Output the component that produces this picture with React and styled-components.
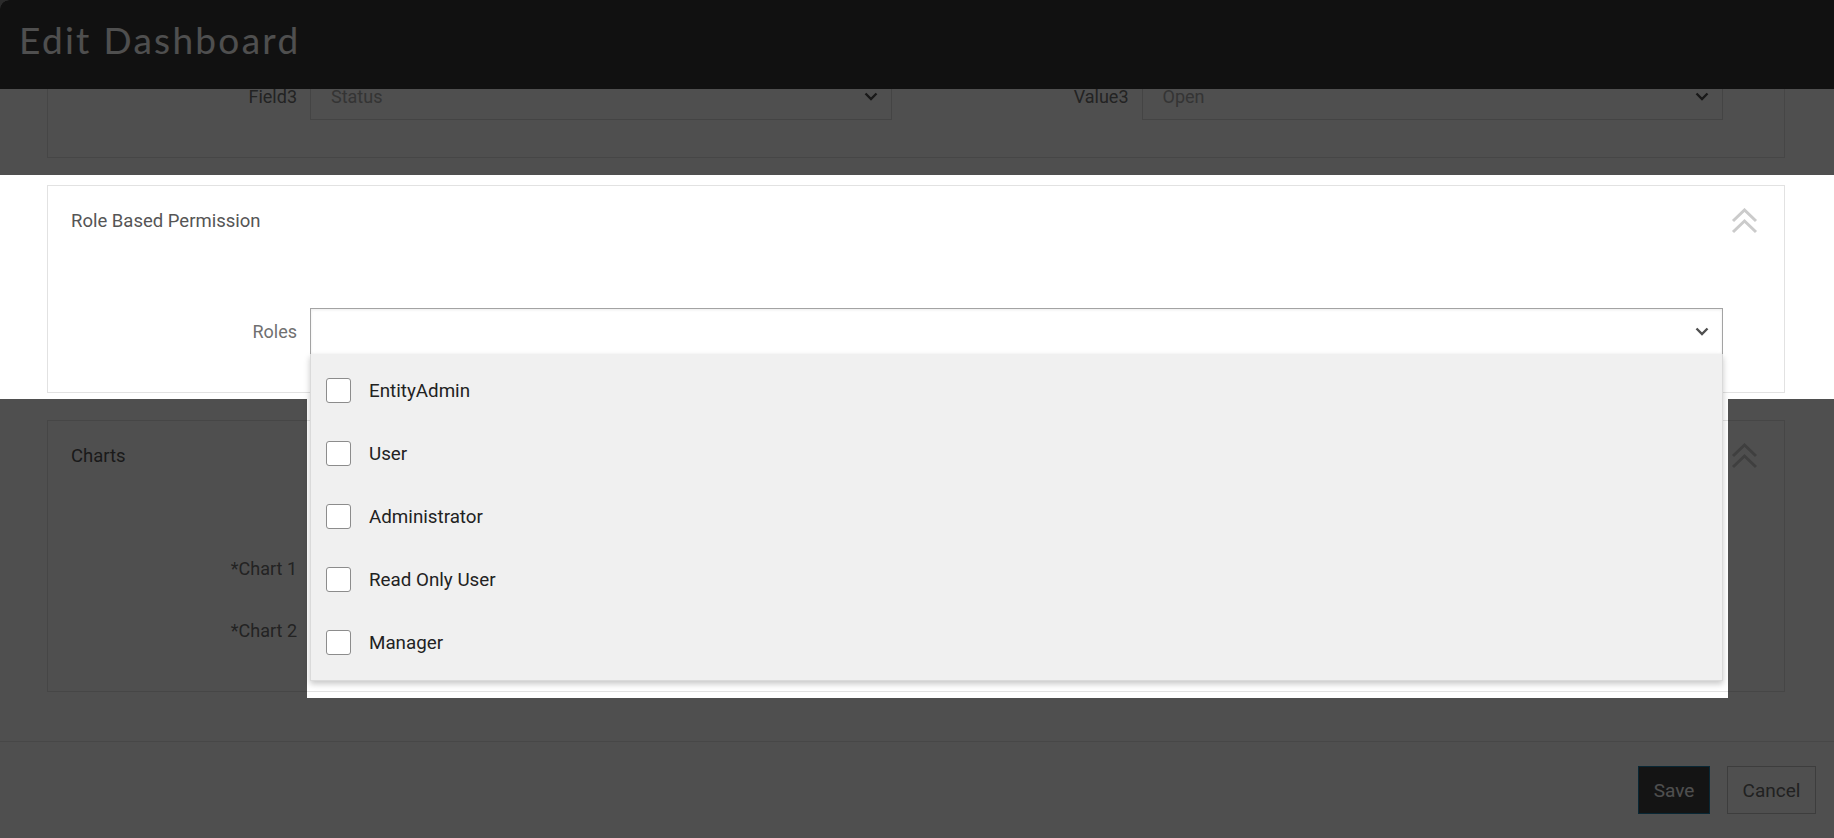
import React, { useLayoutEffect, useRef } from "react";
import styled, { createGlobalStyle } from "styled-components";

const GlobalStyle = createGlobalStyle`
  html, body {
    margin: 0;
    padding: 0;
    background: #8a8a8a;
    font-family: Roboto, "Liberation Sans", Arial, sans-serif;
  }
  * {
    box-sizing: border-box;
  }
`;

const ROLES = ["EntityAdmin", "User", "Administrator", "Read Only User", "Manager"];

// spotlight of the guided tour: everything but these two boxes is dimmed
const MASK_PATH =
  "M0 0H1834V838H0Z M0 175H1834V399H0Z M307 399H1728V698H307Z";

function Chevron() {
  return (
    <svg width="14" height="9" viewBox="0 0 14 9">
      <path d="M1.5 1.5L7 7L12.5 1.5" fill="none" stroke="#505050" strokeWidth="2.4" />
    </svg>
  );
}

function DoubleChevron() {
  return (
    <svg width="27" height="26" viewBox="0 0 27 26">
      <g fill="none" stroke="#cbcbcb" strokeWidth="3">
        <path d="M2 13L13.5 2L25 13" />
        <path d="M2 24L13.5 13L25 24" />
      </g>
    </svg>
  );
}

function Select({ value, $active, children }) {
  return (
    <SelectBox $active={$active}>
      <SelectValue>{value}</SelectValue>
      <Chevron />
      {children}
    </SelectBox>
  );
}

function Field({ label, value }) {
  return (
    <FieldCell>
      <Label>{label}</Label>
      <Select value={value} />
    </FieldCell>
  );
}

export default function App() {
  const bodyRef = useRef(null);
  const roleRef = useRef(null);

  useLayoutEffect(() => {
    // modal body is scrolled so the role panel sits under the tour spotlight
    bodyRef.current.scrollTop = roleRef.current.offsetTop - 96;
  }, []);

  return (
    <Page>
      <GlobalStyle />
      <Modal>
        <Header>
          <Title>Edit Dashboard</Title>
        </Header>
        <Body ref={bodyRef}>
          <Panel>
            <PanelHeader>
              <PanelTitle>Filters</PanelTitle>
              <DoubleChevron />
            </PanelHeader>
            <Rows>
              <Row>
                <Field label="Field1" value="Type" />
                <Field label="Value1" value="Incident" />
              </Row>
              <Row>
                <Field label="Field2" value="Priority" />
                <Field label="Value2" value="High" />
              </Row>
              <Row>
                <Field label="Field3" value="Status" />
                <Field label="Value3" value="Open" />
              </Row>
            </Rows>
          </Panel>

          <Panel ref={roleRef}>
            <PanelHeader>
              <PanelTitle>Role Based Permission</PanelTitle>
              <DoubleChevron />
            </PanelHeader>
            <Rows>
              <Row>
                <FieldCell>
                  <Label>Roles</Label>
                  <Select value="" $active>
                    <Dropdown>
                      {ROLES.map((role) => (
                        <Option key={role}>
                          <CheckBox />
                          <OptionText>{role}</OptionText>
                        </Option>
                      ))}
                    </Dropdown>
                  </Select>
                </FieldCell>
              </Row>
            </Rows>
          </Panel>

          <Panel>
            <PanelHeader>
              <PanelTitle>Charts</PanelTitle>
              <DoubleChevron />
            </PanelHeader>
            <Rows $top={54}>
              <Row>
                <Field label="*Chart 1" value="" />
              </Row>
              <Row>
                <Field label="*Chart 2" value="" />
              </Row>
            </Rows>
          </Panel>
        </Body>
        <Footer>
          <SaveButton>Save</SaveButton>
          <CancelButton>Cancel</CancelButton>
        </Footer>
      </Modal>
      <TourMask viewBox="0 0 1834 838" preserveAspectRatio="none">
        <path d={MASK_PATH} fillRule="evenodd" fill="rgba(0,0,0,0.69)" />
      </TourMask>
    </Page>
  );
}

const Page = styled.div`
  position: relative;
  width: 100%;
  height: 838px;
  overflow: hidden;
`;

const Modal = styled.div`
  display: flex;
  flex-direction: column;
  height: 838px;
  background: #ffffff;
  border-top-left-radius: 9px;
  overflow: hidden;
`;

const Header = styled.header`
  flex: none;
  display: flex;
  align-items: center;
  height: 89px;
  padding: 0 0 10px 19px;
  background: #373737;
`;

const Title = styled.h1`
  margin: 0;
  font-family: Lato, "Noto Sans", sans-serif;
  font-weight: 400;
  font-size: 37px;
  letter-spacing: 2.3px;
  color: #ffffff;
`;

const Body = styled.div`
  position: relative;
  flex: 1;
  overflow: hidden;
  padding: 27px 49px 80px 47px;
  display: flex;
  flex-direction: column;
  gap: 27px;
`;

const Panel = styled.section`
  position: relative;
  border: 1px solid #e2e2e2;
  padding: 0 0 37px 23px;
`;

const PanelHeader = styled.div`
  display: flex;
  align-items: center;
  justify-content: space-between;
  height: 70px;
  padding-right: 26px;
`;

const PanelTitle = styled.h2`
  margin: 0;
  font-size: 18.5px;
  font-weight: 400;
  color: #555555;
`;

const Rows = styled.div`
  display: flex;
  flex-direction: column;
  gap: 15px;
  padding: ${(props) => props.$top ?? 52}px 61px 0 0;
`;

const Row = styled.div`
  display: flex;
  gap: 11px;
`;

const FieldCell = styled.div`
  flex: 1;
  display: flex;
  align-items: center;
  gap: 13px;
`;

const Label = styled.label`
  flex: none;
  width: 226px;
  text-align: right;
  font-size: 18px;
  color: #707070;
`;

const SelectBox = styled.div`
  position: relative;
  flex: 1;
  display: flex;
  align-items: center;
  justify-content: space-between;
  height: 47px;
  padding: 0 13px 0 20px;
  background: #ffffff;
  border: 1px solid ${(props) => (props.$active ? "#a3a3a3" : "#dcdcdc")};
  box-shadow: ${(props) =>
    props.$active ? "inset 0 1px 3px rgba(0, 0, 0, 0.08)" : "none"};
`;

const SelectValue = styled.span`
  font-size: 18px;
  color: #a8a8a8;
`;

const Dropdown = styled.ul`
  position: absolute;
  top: 100%;
  left: -1px;
  right: -1px;
  z-index: 2;
  margin: 0;
  padding: 5px 0 6px;
  list-style: none;
  background: #f0f0f0;
  border: 1px solid #dadada;
  border-top: none;
  box-shadow: 0 3px 6px rgba(0, 0, 0, 0.22);
`;

const Option = styled.li`
  display: flex;
  align-items: center;
  gap: 18px;
  height: 63px;
  padding-left: 15px;
`;

const CheckBox = styled.span`
  width: 25px;
  height: 25px;
  border: 1.5px solid #8c8c8c;
  border-radius: 3px;
  background: #ffffff;
`;

const OptionText = styled.span`
  font-size: 18.8px;
  color: #222222;
`;

const Footer = styled.footer`
  flex: none;
  display: flex;
  align-items: center;
  justify-content: flex-end;
  gap: 17px;
  height: 97px;
  padding: 0 18px 0 0;
  border-top: 1px solid #e4e4e4;
`;

const SaveButton = styled.button`
  height: 48px;
  width: 72px;
  font-family: Roboto, sans-serif;
  font-size: 19px;
  color: #ffffff;
  background: #424242;
  border: 1px solid #1f7fa8;
  cursor: pointer;
`;

const CancelButton = styled.button`
  height: 48px;
  width: 89px;
  font-family: Roboto, sans-serif;
  font-size: 19px;
  color: #6b6b6b;
  background: #ffffff;
  border: 1px solid #c4c4c4;
  cursor: pointer;
`;

const TourMask = styled.svg`
  position: absolute;
  inset: 0;
  width: 100%;
  height: 100%;
  pointer-events: none;
`;
